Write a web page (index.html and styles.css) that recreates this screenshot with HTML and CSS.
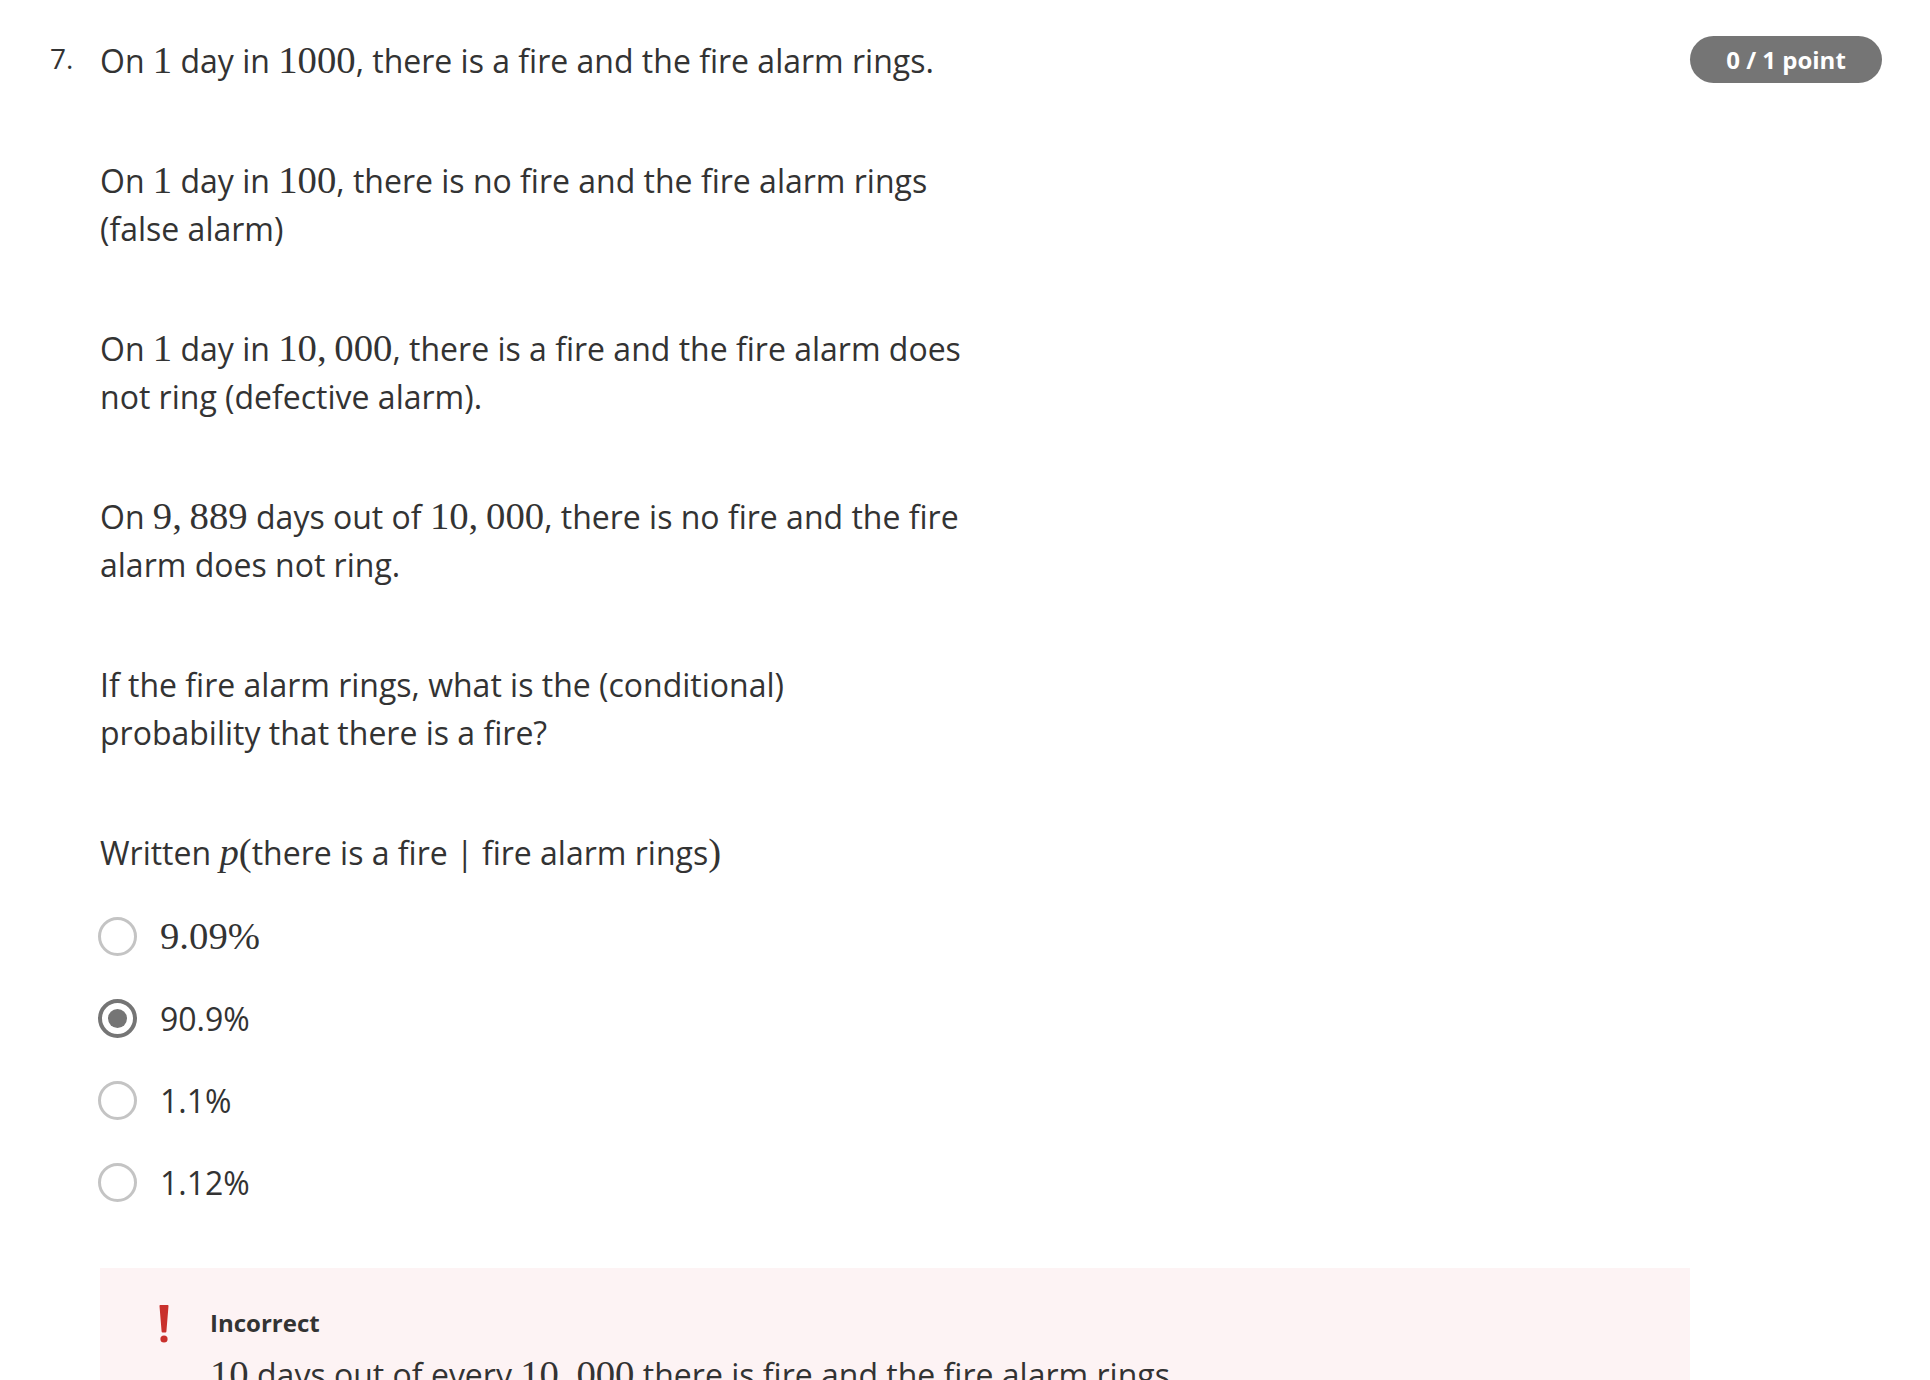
FILE: index.html
```html
<!DOCTYPE html>
<html lang="en">
<head>
<meta charset="utf-8">
<title>Question 7</title>
<link rel="stylesheet" href="styles.css">
</head>
<body>
<div class="question">
  <div class="qnum">7.</div>
  <div class="qbody">
    <p class="para">On <span class="m">1</span> day in <span class="m">1000</span>, there is a fire and the fire alarm rings.</p>
    <p class="para">On <span class="m">1</span> day in <span class="m">100</span>, there is no fire and the fire alarm rings<br>(false alarm)</p>
    <p class="para">On <span class="m">1</span> day in <span class="m">10,&#8201;000</span>, there is a fire and the fire alarm does<br>not ring (defective alarm).</p>
    <p class="para">On <span class="m">9,&#8201;889</span> days out of <span class="m">10,&#8201;000</span>, there is no fire and the fire<br>alarm does not ring.</p>
    <p class="para">If the fire alarm rings, what is the (conditional)<br>probability that there is a fire?</p>
    <p class="para para-last">Written <span class="m"><i>p</i>(</span>there is a fire | fire alarm rings<span class="m">)</span></p>
    <div class="options">
      <div class="option"><span class="radio"></span><span class="opt-text"><span class="m">9.09%</span></span></div>
      <div class="option"><span class="radio radio-checked"></span><span class="opt-text">90.9%</span></div>
      <div class="option"><span class="radio"></span><span class="opt-text">1.1%</span></div>
      <div class="option"><span class="radio"></span><span class="opt-text">1.12%</span></div>
    </div>
    <div class="feedback">
      <div class="fb-icon">
        <svg width="10" height="38" viewBox="0 0 10 38" aria-hidden="true">
          <path d="M1.2 0 H8.8 Q9.6 0 9.5 1 L7.4 26.5 Q7.3 27.5 6.4 27.5 H3.6 Q2.7 27.5 2.6 26.5 L0.5 1 Q0.4 0 1.2 0 Z" fill="#c9302c"/>
          <circle cx="5" cy="34" r="3.6" fill="#c9302c"/>
        </svg>
      </div>
      <div class="fb-body">
        <div class="fb-title">Incorrect</div>
        <p class="fb-text"><span class="m">10</span> days out of every <span class="m">10,&#8201;000</span> there is fire and the fire alarm rings.</p>
      </div>
    </div>
  </div>
  <div class="badge">0 / 1 point</div>
</div>
</body>
</html>
```
FILE: styles.css
```css
html, body {
  margin: 0;
  padding: 0;
  background: #ffffff;
}

body {
  font-family: "Open Sans", "Noto Sans", sans-serif;
  color: #333333;
  overflow: hidden;
  height: 1380px;
}

.question {
  display: flex;
  align-items: flex-start;
  padding: 37px 48px 0 50px;
}

.qnum {
  width: 50px;
  flex: none;
  font-size: 28px;
  line-height: 42px;
  color: #333333;
}

.qbody {
  flex: 1;
  min-width: 0;
}

.para {
  margin: 0 0 72px;
  font-size: 32px;
  line-height: 48px;
}

.para-last {
  margin-bottom: 18px;
}

.m {
  font-family: "Liberation Serif", "Times New Roman", serif;
  font-size: 1.21em;
  line-height: 1;
}

.m i {
  font-style: italic;
}

.options {
  display: flex;
  flex-direction: column;
}

.option {
  display: flex;
  align-items: center;
  height: 82px;
  font-size: 32px;
  line-height: 48px;
}

.opt-text {
  padding-top: 2px;
}

.radio {
  flex: none;
  box-sizing: border-box;
  width: 39px;
  height: 39px;
  margin-left: -2px;
  margin-right: 23px;
  border: 3.5px solid #c4c4c4;
  border-radius: 50%;
  display: grid;
  place-items: center;
}

.radio-checked {
  border: 4px solid #757575;
}

.radio-checked::after {
  content: "";
  width: 19px;
  height: 19px;
  border-radius: 50%;
  background: #757575;
}

.feedback {
  margin-top: 45px;
  background: #fdf3f4;
  display: flex;
  align-items: flex-start;
  padding: 37px 59px 40px;
}

.fb-icon {
  width: 51px;
  flex: none;
  height: 38px;
}

.fb-icon svg {
  display: block;
}

.fb-body {
  flex: 1;
}

.fb-title {
  font-size: 24px;
  font-weight: 700;
  line-height: 36px;
  color: #333333;
}

.fb-text {
  margin: 10px 0 0;
  font-size: 32px;
  line-height: 48px;
}

.badge {
  flex: none;
  width: 192px;
  height: 47px;
  margin-top: -1px;
  border-radius: 24px;
  background: #757575;
  color: #ffffff;
  font-size: 24px;
  font-weight: 700;
  display: flex;
  align-items: center;
  justify-content: center;
}
```
